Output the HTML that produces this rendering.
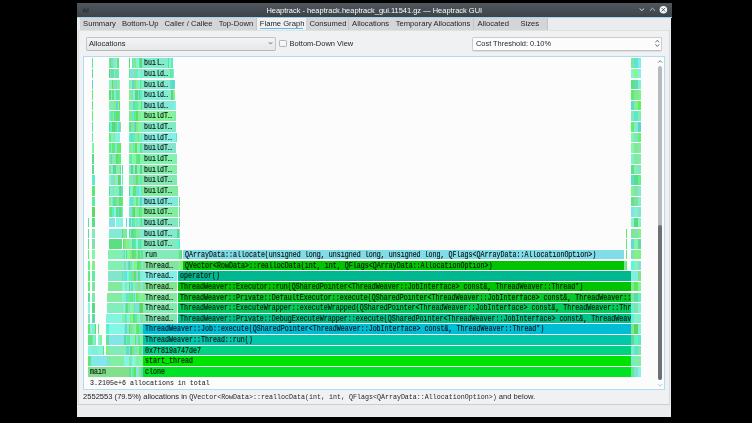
<!DOCTYPE html>
<html><head><meta charset="utf-8"><style>
html,body{margin:0;padding:0;background:#000;width:752px;height:423px;overflow:hidden;position:relative}
*{box-sizing:border-box}
.abs{position:absolute}
#win{position:absolute;left:77.2px;top:3px;width:594.3px;height:414.2px;background:#ebeced}
#title{position:absolute;left:77px;top:3px;width:594.5px;height:13.5px;background:linear-gradient(#4f575e,#3c4349);color:#fcfcfc;font:7.48px "Liberation Sans",sans-serif;text-align:center;line-height:15.3px}
#bl{position:absolute;left:77px;top:16.5px;width:594.5px;height:1.2px;background:#9fd5f0}
.tab{position:absolute;top:17.8px;height:11.8px;background:#d4d5d7;border-right:1px solid #c4c5c7;font:7.65px "Liberation Sans",sans-serif;color:#232629;line-height:11.8px;padding-left:3.5px;white-space:nowrap}
.tab.sel{background:#eff0f1;border-right:none}
.c{position:absolute;height:9.65px;font:8.7px "Liberation Mono",monospace;color:#0c0f10;line-height:9.65px;white-space:nowrap;overflow:hidden}
.c span{display:block;height:9.65px;position:relative;top:1px;overflow:hidden;transform:scaleX(0.766);transform-origin:0 0;margin-left:2.0px;-webkit-text-stroke:0.15px #0c0f10}
#root{position:absolute;left:0;top:0;width:752px;height:423px;will-change:transform}
</style></head><body><div id="root">
<div id="win"></div>
<div id="title">Heaptrack - heaptrack.heaptrack_gui.11541.gz — Heaptrack GUI</div>
<div id="bl"></div>
<svg class="abs" style="left:82px;top:6px" width="8" height="8" viewBox="0 0 8 8"><path d="M1.5,6.5 L1.5,3 M3,6.5 L3,2 M4.5,6.5 L4.5,4 M6,6.5 L6,1.5" stroke="#2a3035" stroke-width="1"/></svg>
<svg class="abs" style="left:630px;top:2px" width="42" height="16" viewBox="630 2 42 16">
<polyline points="639.6,8.5 641.85,10.6 644.1,8.5" fill="none" stroke="#eceff1" stroke-width="0.9"/>
<polyline points="649.9,10.7 652.45,8.2 655,10.7" fill="none" stroke="#c9cdd0" stroke-width="0.9"/>
<circle cx="663.4" cy="9.7" r="3.8" fill="#f4f5f6"/>
<path d="M661.6,7.9 L665.2,11.5 M665.2,7.9 L661.6,11.5" stroke="#4a5157" stroke-width="0.9"/>
</svg>
<div class="abs" style="left:78.2px;top:29.6px;width:591.6px;height:375px;border:1.2px solid #d9dadc;border-bottom-color:#cdcecf;border-top:0.6px solid #dfe0e1;background:#f0f1f2"></div>
<div class="tab" style="left:79.6px;width:39.3px">Summary</div>
<div class="tab" style="left:118.4px;width:43.2px">Bottom-Up</div>
<div class="tab" style="left:161.1px;width:54.7px">Caller / Callee</div>
<div class="tab" style="left:215.3px;width:42.2px">Top-Down</div>
<div class="tab sel" style="left:257px;width:49.0px;padding-left:2.8px">Flame Graph<div class="abs" style="left:2.8px;right:3.4px;top:10.1px;height:0.9px;background:#5fbbea"></div></div>
<div class="tab" style="left:306px;width:43.1px">Consumed</div>
<div class="tab" style="left:348.6px;width:44.1px">Allocations</div>
<div class="tab" style="left:392.2px;width:82.3px">Temporary Allocations</div>
<div class="tab" style="left:474px;width:38.8px">Allocated</div>
<div class="tab" style="left:512.3px;width:36.0px;text-align:center;padding-left:0">Sizes</div>
<!-- combo -->
<div class="abs" style="left:86.2px;top:37.1px;width:190px;height:13.6px;border:1px solid #c3c5c6;border-bottom-color:#b5b7b9;border-radius:2px;background:linear-gradient(#f3f4f4,#e6e7e8);font:7.6px 'Liberation Sans',sans-serif;color:#232629;line-height:11.6px;padding-left:1.7px">Allocations</div>
<div class="abs" style="left:279.3px;top:39.8px;width:7.6px;height:7px;border:1px solid #b3b5b7;border-radius:1.2px;background:linear-gradient(#fafafa,#f0f1f1)"></div>
<div class="abs" style="left:289.6px;top:37.2px;height:13.2px;font:7.5px 'Liberation Sans',sans-serif;color:#232629;line-height:13.2px;white-space:nowrap">Bottom-Down View</div>
<div class="abs" style="left:472.4px;top:37.2px;width:190px;height:13.6px;border:1px solid #cbcdce;border-bottom-color:#c0c2c4;border-radius:2px;background:#fcfcfc;box-shadow:0 0.6px 0.8px rgba(0,0,0,0.08);font:7.4px 'Liberation Sans',sans-serif;color:#232629;line-height:11.2px;padding-left:2.6px">Cost Threshold: 0.10%</div>
<svg class="abs" style="left:260px;top:30px" width="420" height="30" viewBox="260 30 420 30">
<polyline points="268.8,42.1 270.55,44.1 272.3,42.1" fill="none" stroke="#5d6166" stroke-width="0.8"/>
<polyline points="655.4,42.4 657.3,40.2 659.2,42.4" fill="none" stroke="#4d5257" stroke-width="0.8"/>
<polyline points="655.4,44.3 657.3,46.5 659.2,44.3" fill="none" stroke="#4d5257" stroke-width="0.8"/>
</svg>
<!-- frame -->
<div class="abs" style="left:83px;top:56px;width:582px;height:334px;border:1px solid #b2daf0;background:#fcfcfc"></div>
<!-- scrollbar -->
<svg class="abs" style="left:650px;top:55px" width="20" height="340" viewBox="650 55 20 340">
<polyline points="658.3,62.6 660.2,60.6 662.1,62.6" fill="none" stroke="#55595e" stroke-width="0.8"/>
<polyline points="658.3,384.2 660.2,386.2 662.1,384.2" fill="none" stroke="#b0b3b6" stroke-width="0.8"/>
</svg>
<div class="abs" style="left:658px;top:66px;width:4.2px;height:314px;border-radius:2.1px;background:#b8babc"></div>
<div class="abs" style="left:658px;top:225px;width:4.2px;height:155px;border-radius:2.1px;background:#6c7074"></div>
<div class="c" style="left:91.77px;top:57.60px;width:1.05px;height:10.2px;background:#5ce895"></div><div class="c" style="left:108.70px;top:57.60px;width:1.80px;height:10.2px;background:#82e19d"></div><div class="c" style="left:109.80px;top:57.60px;width:1.82px;height:10.2px;background:#5cdf9c"></div><div class="c" style="left:110.92px;top:57.60px;width:3.08px;height:10.2px;background:#82e297"></div><div class="c" style="left:113.30px;top:57.60px;width:2.53px;height:10.2px;background:#82e3e8"></div><div class="c" style="left:115.13px;top:57.60px;width:2.54px;height:10.2px;background:#82f5b6"></div><div class="c" style="left:117.14px;top:57.60px;width:1.98px;height:10.2px;background:#5ce582"></div><div class="c" style="left:129.08px;top:57.60px;width:0.75px;height:10.2px;background:#5cdc74"></div><div class="c" style="left:131.50px;top:57.60px;width:2.00px;height:10.2px;background:#5ce9bc"></div><div class="c" style="left:132.80px;top:57.60px;width:2.08px;height:10.2px;background:#82e4b6"></div><div class="c" style="left:134.18px;top:57.60px;width:2.64px;height:10.2px;background:#82e992"></div><div class="c" style="left:136.11px;top:57.60px;width:2.48px;height:10.2px;background:#82f2d4"></div><div class="c" style="left:137.89px;top:57.60px;width:1.69px;height:10.2px;background:#82f7d7"></div><div class="c" style="left:138.88px;top:57.60px;width:2.27px;height:10.2px;background:#5ce59c"></div><div class="c" style="left:140.45px;top:57.60px;width:2.45px;height:10.2px;background:#5cd77b"></div><div class="c" style="left:142.20px;top:57.60px;width:26.60px;height:10.2px;background:#82ebc7"><span style="width:30.03px;top:1px">buil…</span></div><div class="c" style="left:168.10px;top:57.60px;width:1.83px;height:10.2px;background:#5ce673"></div><div class="c" style="left:169.23px;top:57.60px;width:2.57px;height:10.2px;background:#82f0e8"></div><div class="c" style="left:171.27px;top:57.60px;width:1.25px;height:10.2px;background:#5cecc4"></div><div class="c" style="left:631.40px;top:57.60px;width:3.00px;height:10.2px;background:#82e699"></div><div class="c" style="left:633.70px;top:57.60px;width:4.40px;height:10.2px;background:#5ce3dc"></div><div class="c" style="left:637.57px;top:57.60px;width:3.15px;height:10.2px;background:#82ebe5"></div><div class="c" style="left:91.77px;top:68.85px;width:1.05px;height:9.55px;background:#5cdea3"></div><div class="c" style="left:108.70px;top:68.85px;width:2.18px;height:9.55px;background:#5cd76c"></div><div class="c" style="left:110.18px;top:68.85px;width:1.86px;height:9.55px;background:#82e2b0"></div><div class="c" style="left:111.34px;top:68.85px;width:1.72px;height:9.55px;background:#5cdec0"></div><div class="c" style="left:112.35px;top:68.85px;width:2.68px;height:9.55px;background:#5ce3be"></div><div class="c" style="left:114.33px;top:68.85px;width:1.81px;height:9.55px;background:#82eebc"></div><div class="c" style="left:115.44px;top:68.85px;width:2.13px;height:9.55px;background:#82e48f"></div><div class="c" style="left:117.05px;top:68.85px;width:2.08px;height:9.55px;background:#5ce9cd"></div><div class="c" style="left:128.90px;top:68.85px;width:1.64px;height:9.55px;background:#5ceb97"></div><div class="c" style="left:129.84px;top:68.85px;width:2.52px;height:9.55px;background:#82e0e1"></div><div class="c" style="left:131.66px;top:68.85px;width:3.26px;height:9.55px;background:#82e2d9"></div><div class="c" style="left:134.23px;top:68.85px;width:2.48px;height:9.55px;background:#82e4af"></div><div class="c" style="left:136.01px;top:68.85px;width:2.51px;height:9.55px;background:#5cf5ae"></div><div class="c" style="left:137.81px;top:68.85px;width:1.98px;height:9.55px;background:#82f8e1"></div><div class="c" style="left:139.09px;top:68.85px;width:2.97px;height:9.55px;background:#82ebdf"></div><div class="c" style="left:141.36px;top:68.85px;width:1.54px;height:9.55px;background:#82eeaf"></div><div class="c" style="left:142.20px;top:68.85px;width:28.10px;height:9.55px;background:#82eecc"><span style="width:31.98px;top:1px">build…</span></div><div class="c" style="left:169.60px;top:68.85px;width:1.77px;height:9.55px;background:#5cf266"></div><div class="c" style="left:170.67px;top:68.85px;width:2.65px;height:9.55px;background:#5ce9cb"></div><div class="c" style="left:172.79px;top:68.85px;width:0.83px;height:9.55px;background:#82edcb"></div><div class="c" style="left:631.40px;top:68.85px;width:3.00px;height:9.55px;background:#82f2d8"></div><div class="c" style="left:633.70px;top:68.85px;width:4.40px;height:9.55px;background:#82f88d"></div><div class="c" style="left:637.57px;top:68.85px;width:3.15px;height:9.55px;background:#82f0e5"></div><div class="c" style="left:91.77px;top:79.50px;width:1.05px;height:9.55px;background:#5cd6dd"></div><div class="c" style="left:108.70px;top:79.50px;width:2.04px;height:9.55px;background:#82f5cd"></div><div class="c" style="left:110.04px;top:79.50px;width:2.36px;height:9.55px;background:#82f6ae"></div><div class="c" style="left:111.70px;top:79.50px;width:2.22px;height:9.55px;background:#5cde6c"></div><div class="c" style="left:113.22px;top:79.50px;width:1.93px;height:9.55px;background:#82e6be"></div><div class="c" style="left:114.46px;top:79.50px;width:3.13px;height:9.55px;background:#82dfbe"></div><div class="c" style="left:116.89px;top:79.50px;width:2.18px;height:9.55px;background:#82f38c"></div><div class="c" style="left:118.55px;top:79.50px;width:0.58px;height:9.55px;background:#82ebe4"></div><div class="c" style="left:128.90px;top:79.50px;width:1.94px;height:9.55px;background:#82e5b8"></div><div class="c" style="left:130.14px;top:79.50px;width:2.17px;height:9.55px;background:#82f6b4"></div><div class="c" style="left:131.60px;top:79.50px;width:2.86px;height:9.55px;background:#5cd9d2"></div><div class="c" style="left:133.77px;top:79.50px;width:3.29px;height:9.55px;background:#82e095"></div><div class="c" style="left:136.36px;top:79.50px;width:2.39px;height:9.55px;background:#82f394"></div><div class="c" style="left:138.05px;top:79.50px;width:2.61px;height:9.55px;background:#82eed4"></div><div class="c" style="left:139.96px;top:79.50px;width:1.87px;height:9.55px;background:#5cec71"></div><div class="c" style="left:141.13px;top:79.50px;width:1.77px;height:9.55px;background:#5cf3c6"></div><div class="c" style="left:142.20px;top:79.50px;width:28.60px;height:9.55px;background:#82ebcc"><span style="width:32.64px;top:1px">build…</span></div><div class="c" style="left:170.10px;top:79.50px;width:2.21px;height:9.55px;background:#5cdfde"></div><div class="c" style="left:171.61px;top:79.50px;width:2.93px;height:9.55px;background:#5cd9ba"></div><div class="c" style="left:174.02px;top:79.50px;width:0.61px;height:9.55px;background:#5ce3d3"></div><div class="c" style="left:631.40px;top:79.50px;width:3.00px;height:9.55px;background:#5ce27c"></div><div class="c" style="left:633.70px;top:79.50px;width:4.40px;height:9.55px;background:#5cdeb2"></div><div class="c" style="left:637.57px;top:79.50px;width:3.15px;height:9.55px;background:#82edd6"></div><div class="c" style="left:91.77px;top:90.15px;width:1.05px;height:9.55px;background:#5cf372"></div><div class="c" style="left:108.70px;top:90.15px;width:3.08px;height:9.55px;background:#5cde60"></div><div class="c" style="left:111.08px;top:90.15px;width:2.10px;height:9.55px;background:#82e6e2"></div><div class="c" style="left:112.48px;top:90.15px;width:2.04px;height:9.55px;background:#5ce671"></div><div class="c" style="left:113.82px;top:90.15px;width:2.86px;height:9.55px;background:#82edd5"></div><div class="c" style="left:115.98px;top:90.15px;width:3.14px;height:9.55px;background:#5ce6ae"></div><div class="c" style="left:118.59px;top:90.15px;width:0.53px;height:9.55px;background:#82ef84"></div><div class="c" style="left:128.90px;top:90.15px;width:2.92px;height:9.55px;background:#82f282"></div><div class="c" style="left:131.12px;top:90.15px;width:1.85px;height:9.55px;background:#82e4bd"></div><div class="c" style="left:132.27px;top:90.15px;width:1.80px;height:9.55px;background:#82e1ab"></div><div class="c" style="left:133.38px;top:90.15px;width:2.50px;height:9.55px;background:#82eee4"></div><div class="c" style="left:135.18px;top:90.15px;width:3.10px;height:9.55px;background:#5cd784"></div><div class="c" style="left:137.58px;top:90.15px;width:1.67px;height:9.55px;background:#82e2c1"></div><div class="c" style="left:138.55px;top:90.15px;width:1.65px;height:9.55px;background:#5cd8a4"></div><div class="c" style="left:139.50px;top:90.15px;width:3.40px;height:9.55px;background:#5ceeb0"></div><div class="c" style="left:142.20px;top:90.15px;width:29.70px;height:9.55px;background:#82eed5"><span style="width:34.07px;top:1px">build…</span></div><div class="c" style="left:171.20px;top:90.15px;width:2.64px;height:9.55px;background:#5cd86f"></div><div class="c" style="left:173.14px;top:90.15px;width:1.88px;height:9.55px;background:#82e995"></div><div class="c" style="left:174.49px;top:90.15px;width:0.63px;height:9.55px;background:#82f48b"></div><div class="c" style="left:631.40px;top:90.15px;width:3.00px;height:9.55px;background:#5cec6f"></div><div class="c" style="left:633.70px;top:90.15px;width:4.40px;height:9.55px;background:#82e693"></div><div class="c" style="left:637.57px;top:90.15px;width:3.15px;height:9.55px;background:#82f089"></div><div class="c" style="left:91.97px;top:100.80px;width:0.85px;height:9.55px;background:#5ce0a5"></div><div class="c" style="left:108.70px;top:100.80px;width:2.97px;height:9.55px;background:#82efa1"></div><div class="c" style="left:110.97px;top:100.80px;width:3.09px;height:9.55px;background:#82e7c8"></div><div class="c" style="left:113.36px;top:100.80px;width:1.94px;height:9.55px;background:#82ed93"></div><div class="c" style="left:114.61px;top:100.80px;width:2.27px;height:9.55px;background:#82e98b"></div><div class="c" style="left:116.17px;top:100.80px;width:2.33px;height:9.55px;background:#5cdec9"></div><div class="c" style="left:117.80px;top:100.80px;width:1.81px;height:9.55px;background:#82f795"></div><div class="c" style="left:119.09px;top:100.80px;width:0.94px;height:9.55px;background:#5ce473"></div><div class="c" style="left:128.90px;top:100.80px;width:1.83px;height:9.55px;background:#82ed9d"></div><div class="c" style="left:130.03px;top:100.80px;width:1.76px;height:9.55px;background:#82ee96"></div><div class="c" style="left:131.09px;top:100.80px;width:3.02px;height:9.55px;background:#82e4da"></div><div class="c" style="left:133.41px;top:100.80px;width:2.48px;height:9.55px;background:#5ce3a0"></div><div class="c" style="left:135.19px;top:100.80px;width:2.14px;height:9.55px;background:#5cf397"></div><div class="c" style="left:136.63px;top:100.80px;width:2.54px;height:9.55px;background:#5ce7cf"></div><div class="c" style="left:138.47px;top:100.80px;width:2.16px;height:9.55px;background:#82f2a7"></div><div class="c" style="left:139.93px;top:100.80px;width:1.71px;height:9.55px;background:#82f89e"></div><div class="c" style="left:140.94px;top:100.80px;width:1.96px;height:9.55px;background:#5ce088"></div><div class="c" style="left:142.20px;top:100.80px;width:32.30px;height:9.55px;background:#82ebd5"><span style="width:37.47px;top:1px">build…</span></div><div class="c" style="left:173.98px;top:100.80px;width:2.25px;height:9.55px;background:#82f1e5"></div><div class="c" style="left:631.40px;top:100.80px;width:3.00px;height:9.55px;background:#5cdbce"></div><div class="c" style="left:633.70px;top:100.80px;width:4.40px;height:9.55px;background:#82ee97"></div><div class="c" style="left:637.57px;top:100.80px;width:3.15px;height:9.55px;background:#5cf35c"></div><div class="c" style="left:91.97px;top:111.45px;width:0.85px;height:9.55px;background:#5cf579"></div><div class="c" style="left:108.70px;top:111.45px;width:1.82px;height:9.55px;background:#82ecd7"></div><div class="c" style="left:109.82px;top:111.45px;width:2.04px;height:9.55px;background:#82e4c5"></div><div class="c" style="left:111.16px;top:111.45px;width:2.57px;height:9.55px;background:#5cf291"></div><div class="c" style="left:113.03px;top:111.45px;width:1.70px;height:9.55px;background:#82f599"></div><div class="c" style="left:114.03px;top:111.45px;width:1.72px;height:9.55px;background:#5cd6c3"></div><div class="c" style="left:115.05px;top:111.45px;width:2.04px;height:9.55px;background:#5cee80"></div><div class="c" style="left:116.39px;top:111.45px;width:3.07px;height:9.55px;background:#5ce85d"></div><div class="c" style="left:118.94px;top:111.45px;width:1.09px;height:9.55px;background:#5ce0c2"></div><div class="c" style="left:128.90px;top:111.45px;width:2.50px;height:9.55px;background:#82e690"></div><div class="c" style="left:130.70px;top:111.45px;width:2.05px;height:9.55px;background:#82e59b"></div><div class="c" style="left:132.04px;top:111.45px;width:2.67px;height:9.55px;background:#5cebd8"></div><div class="c" style="left:134.01px;top:111.45px;width:2.36px;height:9.55px;background:#5cf179"></div><div class="c" style="left:135.67px;top:111.45px;width:2.97px;height:9.55px;background:#5ce062"></div><div class="c" style="left:137.93px;top:111.45px;width:2.85px;height:9.55px;background:#82f09a"></div><div class="c" style="left:140.08px;top:111.45px;width:2.02px;height:9.55px;background:#82ed8f"></div><div class="c" style="left:141.40px;top:111.45px;width:1.50px;height:9.55px;background:#82f4c0"></div><div class="c" style="left:142.20px;top:111.45px;width:32.80px;height:9.55px;background:#82f596"><span style="width:38.12px;top:1px">buildT…</span></div><div class="c" style="left:174.48px;top:111.45px;width:1.75px;height:9.55px;background:#82e9ad"></div><div class="c" style="left:631.40px;top:111.45px;width:3.00px;height:9.55px;background:#82e9bc"></div><div class="c" style="left:633.70px;top:111.45px;width:4.40px;height:9.55px;background:#5ce9c9"></div><div class="c" style="left:637.57px;top:111.45px;width:3.15px;height:9.55px;background:#82edb1"></div><div class="c" style="left:91.97px;top:122.10px;width:0.85px;height:9.55px;background:#5ce5ae"></div><div class="c" style="left:108.70px;top:122.10px;width:1.97px;height:9.55px;background:#5cde93"></div><div class="c" style="left:109.97px;top:122.10px;width:3.10px;height:9.55px;background:#5cf3c3"></div><div class="c" style="left:112.37px;top:122.10px;width:3.28px;height:9.55px;background:#5cd771"></div><div class="c" style="left:114.95px;top:122.10px;width:2.66px;height:9.55px;background:#5ce0a2"></div><div class="c" style="left:116.91px;top:122.10px;width:1.74px;height:9.55px;background:#82ebc1"></div><div class="c" style="left:117.95px;top:122.10px;width:2.08px;height:9.55px;background:#5cdfcd"></div><div class="c" style="left:119.51px;top:122.10px;width:0.52px;height:9.55px;background:#82e4a3"></div><div class="c" style="left:128.90px;top:122.10px;width:2.05px;height:9.55px;background:#5ce3b5"></div><div class="c" style="left:130.25px;top:122.10px;width:1.66px;height:9.55px;background:#5ce27f"></div><div class="c" style="left:131.21px;top:122.10px;width:1.60px;height:9.55px;background:#82eb8c"></div><div class="c" style="left:132.11px;top:122.10px;width:2.45px;height:9.55px;background:#82e5a1"></div><div class="c" style="left:133.86px;top:122.10px;width:1.61px;height:9.55px;background:#5ce0e2"></div><div class="c" style="left:134.77px;top:122.10px;width:2.28px;height:9.55px;background:#5cd79c"></div><div class="c" style="left:136.35px;top:122.10px;width:2.12px;height:9.55px;background:#82e68c"></div><div class="c" style="left:137.77px;top:122.10px;width:2.50px;height:9.55px;background:#82f795"></div><div class="c" style="left:139.57px;top:122.10px;width:3.33px;height:9.55px;background:#82f2b3"></div><div class="c" style="left:142.38px;top:122.10px;width:33.95px;height:9.55px;background:#82e9c7"><span style="width:39.62px;top:1px">buildT…</span></div><div class="c" style="left:631.40px;top:122.10px;width:3.00px;height:9.55px;background:#5cf168"></div><div class="c" style="left:633.70px;top:122.10px;width:4.40px;height:9.55px;background:#82ead1"></div><div class="c" style="left:637.57px;top:122.10px;width:3.15px;height:9.55px;background:#5cd6c0"></div><div class="c" style="left:91.97px;top:132.75px;width:0.85px;height:9.55px;background:#5cf3ac"></div><div class="c" style="left:108.70px;top:132.75px;width:2.83px;height:9.55px;background:#5cf073"></div><div class="c" style="left:110.83px;top:132.75px;width:3.02px;height:9.55px;background:#82efd0"></div><div class="c" style="left:113.15px;top:132.75px;width:2.79px;height:9.55px;background:#82ef93"></div><div class="c" style="left:115.24px;top:132.75px;width:2.88px;height:9.55px;background:#82f1e8"></div><div class="c" style="left:117.60px;top:132.75px;width:2.43px;height:9.55px;background:#82f1e6"></div><div class="c" style="left:128.90px;top:132.75px;width:2.76px;height:9.55px;background:#5cf2c5"></div><div class="c" style="left:130.96px;top:132.75px;width:1.65px;height:9.55px;background:#5cdbc4"></div><div class="c" style="left:131.91px;top:132.75px;width:1.78px;height:9.55px;background:#5ce7b7"></div><div class="c" style="left:132.99px;top:132.75px;width:1.63px;height:9.55px;background:#5cebcb"></div><div class="c" style="left:133.92px;top:132.75px;width:2.05px;height:9.55px;background:#5ce8de"></div><div class="c" style="left:135.27px;top:132.75px;width:3.19px;height:9.55px;background:#82f08d"></div><div class="c" style="left:137.76px;top:132.75px;width:1.71px;height:9.55px;background:#5cf3a9"></div><div class="c" style="left:138.77px;top:132.75px;width:1.73px;height:9.55px;background:#82e79f"></div><div class="c" style="left:139.80px;top:132.75px;width:1.95px;height:9.55px;background:#82f6d3"></div><div class="c" style="left:141.05px;top:132.75px;width:1.85px;height:9.55px;background:#82eb8b"></div><div class="c" style="left:142.20px;top:132.75px;width:34.00px;height:9.55px;background:#82f0e4"><span style="width:39.69px;top:1px">buildT…</span></div><div class="c" style="left:175.68px;top:132.75px;width:1.15px;height:9.55px;background:#5ceead"></div><div class="c" style="left:631.40px;top:132.75px;width:3.00px;height:9.55px;background:#82f6ab"></div><div class="c" style="left:633.70px;top:132.75px;width:4.40px;height:9.55px;background:#82e2c2"></div><div class="c" style="left:637.57px;top:132.75px;width:3.15px;height:9.55px;background:#5cf473"></div><div class="c" style="left:91.97px;top:143.40px;width:2.05px;height:9.55px;background:#82f4a6"></div><div class="c" style="left:109.00px;top:143.40px;width:2.65px;height:9.55px;background:#5cf07c"></div><div class="c" style="left:110.95px;top:143.40px;width:1.85px;height:9.55px;background:#82e7d3"></div><div class="c" style="left:112.10px;top:143.40px;width:2.12px;height:9.55px;background:#5cec72"></div><div class="c" style="left:113.52px;top:143.40px;width:1.70px;height:9.55px;background:#5ce0ca"></div><div class="c" style="left:114.52px;top:143.40px;width:1.97px;height:9.55px;background:#82eea6"></div><div class="c" style="left:115.79px;top:143.40px;width:2.09px;height:9.55px;background:#82edbc"></div><div class="c" style="left:117.18px;top:143.40px;width:3.29px;height:9.55px;background:#5cec7c"></div><div class="c" style="left:119.94px;top:143.40px;width:0.89px;height:9.55px;background:#5ce95e"></div><div class="c" style="left:128.90px;top:143.40px;width:1.73px;height:9.55px;background:#82efba"></div><div class="c" style="left:129.93px;top:143.40px;width:2.26px;height:9.55px;background:#82e68b"></div><div class="c" style="left:131.49px;top:143.40px;width:1.84px;height:9.55px;background:#82efa3"></div><div class="c" style="left:132.63px;top:143.40px;width:1.83px;height:9.55px;background:#5cefaf"></div><div class="c" style="left:133.75px;top:143.40px;width:1.79px;height:9.55px;background:#82ea9f"></div><div class="c" style="left:134.85px;top:143.40px;width:3.09px;height:9.55px;background:#5ce560"></div><div class="c" style="left:137.24px;top:143.40px;width:3.21px;height:9.55px;background:#82f4ba"></div><div class="c" style="left:139.75px;top:143.40px;width:3.15px;height:9.55px;background:#5ce694"></div><div class="c" style="left:142.38px;top:143.40px;width:33.95px;height:9.55px;background:#82e6cc"><span style="width:39.62px;top:1px">buildT…</span></div><div class="c" style="left:631.40px;top:143.40px;width:3.00px;height:9.55px;background:#82f5b6"></div><div class="c" style="left:633.70px;top:143.40px;width:4.40px;height:9.55px;background:#82e98e"></div><div class="c" style="left:637.57px;top:143.40px;width:3.15px;height:9.55px;background:#82eaad"></div><div class="c" style="left:91.97px;top:154.05px;width:2.15px;height:9.55px;background:#5cda92"></div><div class="c" style="left:109.00px;top:154.05px;width:2.88px;height:9.55px;background:#82eb91"></div><div class="c" style="left:111.18px;top:154.05px;width:1.93px;height:9.55px;background:#5cd5d5"></div><div class="c" style="left:112.41px;top:154.05px;width:2.23px;height:9.55px;background:#82ebb3"></div><div class="c" style="left:113.94px;top:154.05px;width:2.60px;height:9.55px;background:#82eab7"></div><div class="c" style="left:115.84px;top:154.05px;width:3.05px;height:9.55px;background:#5ce06c"></div><div class="c" style="left:118.20px;top:154.05px;width:2.73px;height:9.55px;background:#5cef74"></div><div class="c" style="left:120.40px;top:154.05px;width:0.50px;height:9.55px;background:#5cea8f"></div><div class="c" style="left:128.90px;top:154.05px;width:2.23px;height:9.55px;background:#82ec85"></div><div class="c" style="left:130.43px;top:154.05px;width:2.67px;height:9.55px;background:#5cecb5"></div><div class="c" style="left:132.41px;top:154.05px;width:1.74px;height:9.55px;background:#82f6b5"></div><div class="c" style="left:133.44px;top:154.05px;width:2.88px;height:9.55px;background:#82f3a6"></div><div class="c" style="left:135.62px;top:154.05px;width:3.15px;height:9.55px;background:#5cec70"></div><div class="c" style="left:138.07px;top:154.05px;width:2.31px;height:9.55px;background:#5ce18c"></div><div class="c" style="left:139.68px;top:154.05px;width:3.22px;height:9.55px;background:#82f3a2"></div><div class="c" style="left:142.38px;top:154.05px;width:34.95px;height:9.55px;background:#82f3ae"><span style="width:40.93px;top:1px">buildT…</span></div><div class="c" style="left:631.40px;top:154.05px;width:3.00px;height:9.55px;background:#82efc7"></div><div class="c" style="left:633.70px;top:154.05px;width:4.40px;height:9.55px;background:#82e6a5"></div><div class="c" style="left:637.57px;top:154.05px;width:3.15px;height:9.55px;background:#82eca1"></div><div class="c" style="left:91.97px;top:164.70px;width:2.35px;height:9.55px;background:#5cdf8d"></div><div class="c" style="left:109.00px;top:164.70px;width:2.74px;height:9.55px;background:#82e397"></div><div class="c" style="left:111.04px;top:164.70px;width:1.73px;height:9.55px;background:#82efe7"></div><div class="c" style="left:112.06px;top:164.70px;width:1.97px;height:9.55px;background:#82e9e1"></div><div class="c" style="left:113.34px;top:164.70px;width:1.84px;height:9.55px;background:#5cdd83"></div><div class="c" style="left:114.48px;top:164.70px;width:2.18px;height:9.55px;background:#5cd990"></div><div class="c" style="left:115.96px;top:164.70px;width:2.04px;height:9.55px;background:#82f19b"></div><div class="c" style="left:117.30px;top:164.70px;width:2.87px;height:9.55px;background:#82ecb2"></div><div class="c" style="left:119.65px;top:164.70px;width:1.18px;height:9.55px;background:#5ce588"></div><div class="c" style="left:121.97px;top:164.70px;width:1.15px;height:9.55px;background:#5cd7ad"></div><div class="c" style="left:128.90px;top:164.70px;width:3.25px;height:9.55px;background:#82e3d8"></div><div class="c" style="left:131.45px;top:164.70px;width:2.67px;height:9.55px;background:#5cde6b"></div><div class="c" style="left:133.42px;top:164.70px;width:2.02px;height:9.55px;background:#82ebd3"></div><div class="c" style="left:134.74px;top:164.70px;width:3.22px;height:9.55px;background:#5cd670"></div><div class="c" style="left:137.26px;top:164.70px;width:2.81px;height:9.55px;background:#82eecc"></div><div class="c" style="left:139.37px;top:164.70px;width:1.72px;height:9.55px;background:#82efbc"></div><div class="c" style="left:140.39px;top:164.70px;width:2.51px;height:9.55px;background:#5cd980"></div><div class="c" style="left:142.38px;top:164.70px;width:34.95px;height:9.55px;background:#82eea9"><span style="width:40.93px;top:1px">buildT…</span></div><div class="c" style="left:631.40px;top:164.70px;width:3.00px;height:9.55px;background:#5ce18b"></div><div class="c" style="left:633.70px;top:164.70px;width:4.40px;height:9.55px;background:#82eeb4"></div><div class="c" style="left:637.57px;top:164.70px;width:3.15px;height:9.55px;background:#82e7c1"></div><div class="c" style="left:91.97px;top:175.35px;width:2.95px;height:9.55px;background:#5cebcb"></div><div class="c" style="left:109.00px;top:175.35px;width:3.00px;height:9.55px;background:#82f5d3"></div><div class="c" style="left:111.30px;top:175.35px;width:3.12px;height:9.55px;background:#82e2c7"></div><div class="c" style="left:113.72px;top:175.35px;width:1.60px;height:9.55px;background:#82e39f"></div><div class="c" style="left:114.63px;top:175.35px;width:1.66px;height:9.55px;background:#82f5a8"></div><div class="c" style="left:115.59px;top:175.35px;width:2.67px;height:9.55px;background:#82efd1"></div><div class="c" style="left:117.56px;top:175.35px;width:2.90px;height:9.55px;background:#5cd967"></div><div class="c" style="left:119.93px;top:175.35px;width:0.90px;height:9.55px;background:#5cdd9b"></div><div class="c" style="left:122.17px;top:175.35px;width:1.15px;height:9.55px;background:#5cf5be"></div><div class="c" style="left:128.90px;top:175.35px;width:2.51px;height:9.55px;background:#82eda5"></div><div class="c" style="left:130.71px;top:175.35px;width:2.70px;height:9.55px;background:#82e6bd"></div><div class="c" style="left:132.71px;top:175.35px;width:2.53px;height:9.55px;background:#82e0b5"></div><div class="c" style="left:134.54px;top:175.35px;width:2.12px;height:9.55px;background:#82e09a"></div><div class="c" style="left:135.96px;top:175.35px;width:2.75px;height:9.55px;background:#5ce669"></div><div class="c" style="left:138.01px;top:175.35px;width:2.73px;height:9.55px;background:#82ea9e"></div><div class="c" style="left:140.04px;top:175.35px;width:2.86px;height:9.55px;background:#5cf2a0"></div><div class="c" style="left:142.38px;top:175.35px;width:34.95px;height:9.55px;background:#82e9b3"><span style="width:40.93px;top:1px">buildT…</span></div><div class="c" style="left:631.40px;top:175.35px;width:3.00px;height:9.55px;background:#5cdec7"></div><div class="c" style="left:633.70px;top:175.35px;width:4.40px;height:9.55px;background:#5cda92"></div><div class="c" style="left:637.57px;top:175.35px;width:3.15px;height:9.55px;background:#5cf28c"></div><div class="c" style="left:91.97px;top:186.00px;width:2.95px;height:9.55px;background:#5ce57c"></div><div class="c" style="left:109.00px;top:186.00px;width:2.10px;height:9.55px;background:#5cea67"></div><div class="c" style="left:110.40px;top:186.00px;width:3.25px;height:9.55px;background:#82e8e2"></div><div class="c" style="left:112.95px;top:186.00px;width:1.99px;height:9.55px;background:#82e6a3"></div><div class="c" style="left:114.24px;top:186.00px;width:2.10px;height:9.55px;background:#82f2c0"></div><div class="c" style="left:115.64px;top:186.00px;width:3.12px;height:9.55px;background:#82eeb6"></div><div class="c" style="left:118.06px;top:186.00px;width:1.70px;height:9.55px;background:#82f294"></div><div class="c" style="left:119.06px;top:186.00px;width:1.69px;height:9.55px;background:#5cd6bd"></div><div class="c" style="left:120.05px;top:186.00px;width:1.69px;height:9.55px;background:#5cd77a"></div><div class="c" style="left:121.21px;top:186.00px;width:2.11px;height:9.55px;background:#5ce2d3"></div><div class="c" style="left:128.90px;top:186.00px;width:1.73px;height:9.55px;background:#5cdc92"></div><div class="c" style="left:129.93px;top:186.00px;width:2.71px;height:9.55px;background:#82efe0"></div><div class="c" style="left:131.94px;top:186.00px;width:2.13px;height:9.55px;background:#82f6b1"></div><div class="c" style="left:133.37px;top:186.00px;width:3.27px;height:9.55px;background:#5ce777"></div><div class="c" style="left:135.95px;top:186.00px;width:1.73px;height:9.55px;background:#82e2ae"></div><div class="c" style="left:136.98px;top:186.00px;width:3.10px;height:9.55px;background:#5cecd8"></div><div class="c" style="left:139.39px;top:186.00px;width:2.21px;height:9.55px;background:#82e8e9"></div><div class="c" style="left:140.89px;top:186.00px;width:2.01px;height:9.55px;background:#5cf2a9"></div><div class="c" style="left:142.38px;top:186.00px;width:35.25px;height:9.55px;background:#82eb9f"><span style="width:41.32px;top:1px">buildT…</span></div><div class="c" style="left:631.40px;top:186.00px;width:3.00px;height:9.55px;background:#82f38d"></div><div class="c" style="left:633.70px;top:186.00px;width:4.40px;height:9.55px;background:#82e0b4"></div><div class="c" style="left:637.57px;top:186.00px;width:3.15px;height:9.55px;background:#82ebc6"></div><div class="c" style="left:91.97px;top:196.65px;width:2.95px;height:9.55px;background:#5ceba5"></div><div class="c" style="left:109.00px;top:196.65px;width:2.22px;height:9.55px;background:#82ee85"></div><div class="c" style="left:110.52px;top:196.65px;width:2.02px;height:9.55px;background:#82f3e2"></div><div class="c" style="left:111.84px;top:196.65px;width:2.24px;height:9.55px;background:#82ed8a"></div><div class="c" style="left:113.38px;top:196.65px;width:1.71px;height:9.55px;background:#5cddd6"></div><div class="c" style="left:114.38px;top:196.65px;width:2.63px;height:9.55px;background:#5ce488"></div><div class="c" style="left:116.31px;top:196.65px;width:3.22px;height:9.55px;background:#82e0a3"></div><div class="c" style="left:118.84px;top:196.65px;width:2.77px;height:9.55px;background:#5ce08c"></div><div class="c" style="left:121.08px;top:196.65px;width:2.24px;height:9.55px;background:#5cef66"></div><div class="c" style="left:128.90px;top:196.65px;width:2.00px;height:9.55px;background:#82eedc"></div><div class="c" style="left:130.20px;top:196.65px;width:3.22px;height:9.55px;background:#5ce5dd"></div><div class="c" style="left:132.72px;top:196.65px;width:2.33px;height:9.55px;background:#82ee92"></div><div class="c" style="left:134.35px;top:196.65px;width:1.91px;height:9.55px;background:#82f6a8"></div><div class="c" style="left:135.56px;top:196.65px;width:2.91px;height:9.55px;background:#5cee82"></div><div class="c" style="left:137.77px;top:196.65px;width:2.14px;height:9.55px;background:#82eae4"></div><div class="c" style="left:139.22px;top:196.65px;width:1.73px;height:9.55px;background:#82e5b3"></div><div class="c" style="left:140.25px;top:196.65px;width:2.02px;height:9.55px;background:#5cd8c6"></div><div class="c" style="left:141.57px;top:196.65px;width:1.33px;height:9.55px;background:#82e996"></div><div class="c" style="left:142.38px;top:196.65px;width:35.25px;height:9.55px;background:#82e9df"><span style="width:41.32px;top:1px">buildT…</span></div><div class="c" style="left:178.98px;top:196.65px;width:1.15px;height:9.55px;background:#5ce969"></div><div class="c" style="left:631.40px;top:196.65px;width:3.00px;height:9.55px;background:#5ce58c"></div><div class="c" style="left:633.70px;top:196.65px;width:4.40px;height:9.55px;background:#82e09a"></div><div class="c" style="left:637.57px;top:196.65px;width:3.15px;height:9.55px;background:#82eece"></div><div class="c" style="left:91.97px;top:207.30px;width:2.95px;height:9.55px;background:#5cd967"></div><div class="c" style="left:109.00px;top:207.30px;width:1.74px;height:9.55px;background:#82e2b6"></div><div class="c" style="left:110.04px;top:207.30px;width:2.81px;height:9.55px;background:#5ce778"></div><div class="c" style="left:112.15px;top:207.30px;width:2.31px;height:9.55px;background:#5ceeca"></div><div class="c" style="left:113.76px;top:207.30px;width:2.52px;height:9.55px;background:#82f7d5"></div><div class="c" style="left:115.57px;top:207.30px;width:2.93px;height:9.55px;background:#5ce18c"></div><div class="c" style="left:117.80px;top:207.30px;width:2.06px;height:9.55px;background:#5ce0d4"></div><div class="c" style="left:119.15px;top:207.30px;width:2.35px;height:9.55px;background:#5cdc83"></div><div class="c" style="left:120.80px;top:207.30px;width:2.08px;height:9.55px;background:#5ced7b"></div><div class="c" style="left:122.35px;top:207.30px;width:0.97px;height:9.55px;background:#82e6c1"></div><div class="c" style="left:128.90px;top:207.30px;width:2.70px;height:9.55px;background:#82e2d4"></div><div class="c" style="left:130.90px;top:207.30px;width:1.66px;height:9.55px;background:#82dfbd"></div><div class="c" style="left:131.87px;top:207.30px;width:1.99px;height:9.55px;background:#5ce799"></div><div class="c" style="left:133.16px;top:207.30px;width:2.10px;height:9.55px;background:#5cda63"></div><div class="c" style="left:134.56px;top:207.30px;width:3.25px;height:9.55px;background:#82f19a"></div><div class="c" style="left:137.11px;top:207.30px;width:2.23px;height:9.55px;background:#82e5ba"></div><div class="c" style="left:138.65px;top:207.30px;width:2.92px;height:9.55px;background:#5cf05c"></div><div class="c" style="left:140.86px;top:207.30px;width:2.04px;height:9.55px;background:#5cee95"></div><div class="c" style="left:142.38px;top:207.30px;width:35.25px;height:9.55px;background:#82ee9f"><span style="width:41.32px;top:1px">buildT…</span></div><div class="c" style="left:178.98px;top:207.30px;width:1.15px;height:9.55px;background:#5ce995"></div><div class="c" style="left:631.40px;top:207.30px;width:3.00px;height:9.55px;background:#82e1e5"></div><div class="c" style="left:633.70px;top:207.30px;width:4.40px;height:9.55px;background:#82f0ce"></div><div class="c" style="left:637.57px;top:207.30px;width:3.15px;height:9.55px;background:#82e4d0"></div><div class="c" style="left:88.38px;top:217.95px;width:0.50px;height:9.55px;background:#5ce493"></div><div class="c" style="left:91.97px;top:217.95px;width:2.95px;height:9.55px;background:#5cde85"></div><div class="c" style="left:109.17px;top:217.95px;width:6.15px;height:9.55px;background:#82e4e4"></div><div class="c" style="left:115.50px;top:217.95px;width:7.20px;height:9.55px;background:#82f5e4"></div><div class="c" style="left:122.17px;top:217.95px;width:1.15px;height:9.55px;background:#82f6d3"></div><div class="c" style="left:126.38px;top:217.95px;width:0.50px;height:9.55px;background:#5cd5e2"></div><div class="c" style="left:128.90px;top:217.95px;width:2.75px;height:9.55px;background:#5cdcc1"></div><div class="c" style="left:130.95px;top:217.95px;width:1.95px;height:9.55px;background:#82f8c0"></div><div class="c" style="left:132.20px;top:217.95px;width:1.71px;height:9.55px;background:#5cd9de"></div><div class="c" style="left:133.21px;top:217.95px;width:2.54px;height:9.55px;background:#5cefb3"></div><div class="c" style="left:135.04px;top:217.95px;width:1.88px;height:9.55px;background:#82f5a4"></div><div class="c" style="left:136.22px;top:217.95px;width:2.08px;height:9.55px;background:#82e8b6"></div><div class="c" style="left:137.60px;top:217.95px;width:2.13px;height:9.55px;background:#82f1af"></div><div class="c" style="left:139.03px;top:217.95px;width:1.63px;height:9.55px;background:#5cf5df"></div><div class="c" style="left:139.96px;top:217.95px;width:1.94px;height:9.55px;background:#5cf39e"></div><div class="c" style="left:141.20px;top:217.95px;width:1.70px;height:9.55px;background:#5cdca1"></div><div class="c" style="left:142.38px;top:217.95px;width:35.25px;height:9.55px;background:#82e6c2"><span style="width:41.32px;top:1px">buildT…</span></div><div class="c" style="left:178.98px;top:217.95px;width:1.15px;height:9.55px;background:#5ce995"></div><div class="c" style="left:631.40px;top:217.95px;width:3.00px;height:9.55px;background:#82f5cd"></div><div class="c" style="left:633.70px;top:217.95px;width:4.40px;height:9.55px;background:#5cd97e"></div><div class="c" style="left:637.57px;top:217.95px;width:3.15px;height:9.55px;background:#82f3bb"></div><div class="c" style="left:88.38px;top:228.60px;width:0.50px;height:9.55px;background:#5cd99e"></div><div class="c" style="left:91.97px;top:228.60px;width:2.95px;height:9.55px;background:#82eabb"></div><div class="c" style="left:109.00px;top:228.60px;width:13.70px;height:9.55px;background:#82ebd5"></div><div class="c" style="left:122.00px;top:228.60px;width:1.82px;height:9.55px;background:#5cd7b6"></div><div class="c" style="left:123.12px;top:228.60px;width:2.97px;height:9.55px;background:#82eb8d"></div><div class="c" style="left:125.57px;top:228.60px;width:1.76px;height:9.55px;background:#5cf3ae"></div><div class="c" style="left:128.90px;top:228.60px;width:2.19px;height:9.55px;background:#5cdcb1"></div><div class="c" style="left:130.39px;top:228.60px;width:1.71px;height:9.55px;background:#82ebbf"></div><div class="c" style="left:131.41px;top:228.60px;width:2.95px;height:9.55px;background:#5cdd8d"></div><div class="c" style="left:133.65px;top:228.60px;width:3.20px;height:9.55px;background:#5ce98f"></div><div class="c" style="left:136.16px;top:228.60px;width:3.17px;height:9.55px;background:#82eb8d"></div><div class="c" style="left:138.63px;top:228.60px;width:2.65px;height:9.55px;background:#82e4d2"></div><div class="c" style="left:140.58px;top:228.60px;width:2.32px;height:9.55px;background:#82ebcf"></div><div class="c" style="left:142.20px;top:228.60px;width:35.40px;height:9.55px;background:#82e9cc"><span style="width:41.51px;top:1px">buildT…</span></div><div class="c" style="left:176.90px;top:228.60px;width:2.38px;height:9.55px;background:#5cd988"></div><div class="c" style="left:178.75px;top:228.60px;width:1.57px;height:9.55px;background:#82e1de"></div><div class="c" style="left:626.17px;top:228.60px;width:0.85px;height:9.55px;background:#5cec75"></div><div class="c" style="left:631.40px;top:228.60px;width:3.00px;height:9.55px;background:#82e58e"></div><div class="c" style="left:633.70px;top:228.60px;width:4.40px;height:9.55px;background:#82e0b6"></div><div class="c" style="left:637.57px;top:228.60px;width:3.15px;height:9.55px;background:#82f383"></div><div class="c" style="left:88.38px;top:239.25px;width:0.50px;height:9.55px;background:#5ce979"></div><div class="c" style="left:91.97px;top:239.25px;width:2.95px;height:9.55px;background:#82e0b4"></div><div class="c" style="left:109.17px;top:239.25px;width:12.65px;height:9.55px;background:#5cdf82"></div><div class="c" style="left:122.50px;top:239.25px;width:1.87px;height:9.55px;background:#5ce370"></div><div class="c" style="left:123.67px;top:239.25px;width:3.25px;height:9.55px;background:#82e587"></div><div class="c" style="left:126.22px;top:239.25px;width:3.03px;height:9.55px;background:#82f486"></div><div class="c" style="left:128.55px;top:239.25px;width:2.15px;height:9.55px;background:#82ebcd"></div><div class="c" style="left:130.00px;top:239.25px;width:3.04px;height:9.55px;background:#82f7a8"></div><div class="c" style="left:132.34px;top:239.25px;width:2.12px;height:9.55px;background:#5cdfa1"></div><div class="c" style="left:133.77px;top:239.25px;width:2.22px;height:9.55px;background:#5ceaa3"></div><div class="c" style="left:135.29px;top:239.25px;width:1.61px;height:9.55px;background:#5ce9a8"></div><div class="c" style="left:136.20px;top:239.25px;width:2.90px;height:9.55px;background:#82f7e8"></div><div class="c" style="left:138.40px;top:239.25px;width:1.91px;height:9.55px;background:#5ce99d"></div><div class="c" style="left:139.60px;top:239.25px;width:1.82px;height:9.55px;background:#5ce797"></div><div class="c" style="left:140.72px;top:239.25px;width:2.18px;height:9.55px;background:#5ceac7"></div><div class="c" style="left:142.20px;top:239.25px;width:35.50px;height:9.55px;background:#82ebbd"><span style="width:41.64px;top:1px">buildT…</span></div><div class="c" style="left:177.00px;top:239.25px;width:2.70px;height:9.55px;background:#5cf1e2"></div><div class="c" style="left:179.18px;top:239.25px;width:1.15px;height:9.55px;background:#5cf094"></div><div class="c" style="left:626.17px;top:239.25px;width:0.85px;height:9.55px;background:#5cec75"></div><div class="c" style="left:631.40px;top:239.25px;width:3.00px;height:9.55px;background:#5cdbdc"></div><div class="c" style="left:633.70px;top:239.25px;width:4.40px;height:9.55px;background:#82f5a2"></div><div class="c" style="left:637.57px;top:239.25px;width:3.15px;height:9.55px;background:#5cdca0"></div><div class="c" style="left:88.38px;top:249.90px;width:0.95px;height:9.55px;background:#5cef71"></div><div class="c" style="left:91.97px;top:249.90px;width:2.95px;height:9.55px;background:#82f6a9"></div><div class="c" style="left:108.00px;top:249.90px;width:14.70px;height:9.55px;background:#82f0ae"></div><div class="c" style="left:122.00px;top:249.90px;width:2.47px;height:9.55px;background:#82e1e0"></div><div class="c" style="left:123.77px;top:249.90px;width:2.24px;height:9.55px;background:#5cf572"></div><div class="c" style="left:125.31px;top:249.90px;width:1.71px;height:9.55px;background:#82f2de"></div><div class="c" style="left:126.32px;top:249.90px;width:1.79px;height:9.55px;background:#5cdbac"></div><div class="c" style="left:127.41px;top:249.90px;width:2.98px;height:9.55px;background:#82f897"></div><div class="c" style="left:129.69px;top:249.90px;width:2.83px;height:9.55px;background:#82e68a"></div><div class="c" style="left:131.82px;top:249.90px;width:2.64px;height:9.55px;background:#5ce075"></div><div class="c" style="left:133.75px;top:249.90px;width:2.64px;height:9.55px;background:#5ce873"></div><div class="c" style="left:135.70px;top:249.90px;width:3.24px;height:9.55px;background:#82ee9c"></div><div class="c" style="left:138.24px;top:249.90px;width:2.65px;height:9.55px;background:#5cdf90"></div><div class="c" style="left:140.18px;top:249.90px;width:1.94px;height:9.55px;background:#82eb96"></div><div class="c" style="left:141.42px;top:249.90px;width:1.88px;height:9.55px;background:#5ce299"></div><div class="c" style="left:142.60px;top:249.90px;width:35.70px;height:9.55px;background:#82ebb8"><span style="width:41.91px;top:1px">run</span></div><div class="c" style="left:177.60px;top:249.90px;width:2.15px;height:9.55px;background:#82e4b4"></div><div class="c" style="left:179.05px;top:249.90px;width:1.72px;height:9.55px;background:#5ceb6b"></div><div class="c" style="left:180.07px;top:249.90px;width:1.70px;height:9.55px;background:#5cea7e"></div><div class="c" style="left:181.25px;top:249.90px;width:1.08px;height:9.55px;background:#5cd883"></div><div class="c" style="left:183.48px;top:249.90px;width:440.55px;height:9.55px;background:#80dce6"><span style="width:570.43px;top:1px">QArrayData::allocate(unsigned long, unsigned long, unsigned long, QFlags&lt;QArrayData::AllocationOption&gt;)</span></div><div class="c" style="left:626.17px;top:249.90px;width:0.85px;height:9.55px;background:#5cec75"></div><div class="c" style="left:631.40px;top:249.90px;width:3.00px;height:9.55px;background:#82e0b8"></div><div class="c" style="left:633.70px;top:249.90px;width:4.40px;height:9.55px;background:#82f188"></div><div class="c" style="left:637.57px;top:249.90px;width:3.15px;height:9.55px;background:#82ef87"></div><div class="c" style="left:88.38px;top:260.55px;width:1.45px;height:9.55px;background:#5cf587"></div><div class="c" style="left:91.97px;top:260.55px;width:2.95px;height:9.55px;background:#82ef88"></div><div class="c" style="left:108.00px;top:260.55px;width:14.70px;height:9.55px;background:#82f0b3"></div><div class="c" style="left:122.00px;top:260.55px;width:2.21px;height:9.55px;background:#82edc8"></div><div class="c" style="left:123.51px;top:260.55px;width:2.77px;height:9.55px;background:#82e2a1"></div><div class="c" style="left:125.58px;top:260.55px;width:2.67px;height:9.55px;background:#82ebde"></div><div class="c" style="left:127.55px;top:260.55px;width:2.05px;height:9.55px;background:#5ce4ba"></div><div class="c" style="left:128.90px;top:260.55px;width:2.16px;height:9.55px;background:#5cd9a4"></div><div class="c" style="left:130.37px;top:260.55px;width:2.65px;height:9.55px;background:#82e1a7"></div><div class="c" style="left:132.31px;top:260.55px;width:2.03px;height:9.55px;background:#82f3cb"></div><div class="c" style="left:133.64px;top:260.55px;width:3.12px;height:9.55px;background:#82f682"></div><div class="c" style="left:136.07px;top:260.55px;width:1.98px;height:9.55px;background:#82e8cf"></div><div class="c" style="left:137.34px;top:260.55px;width:2.31px;height:9.55px;background:#5ce463"></div><div class="c" style="left:138.95px;top:260.55px;width:1.99px;height:9.55px;background:#5cf063"></div><div class="c" style="left:140.24px;top:260.55px;width:1.60px;height:9.55px;background:#5ce38d"></div><div class="c" style="left:141.14px;top:260.55px;width:2.16px;height:9.55px;background:#82e6b5"></div><div class="c" style="left:142.60px;top:260.55px;width:35.70px;height:9.55px;background:#82e49f"><span style="width:41.91px;top:1px">Thread…</span></div><div class="c" style="left:177.60px;top:260.55px;width:2.32px;height:9.55px;background:#82f191"></div><div class="c" style="left:179.22px;top:260.55px;width:2.67px;height:9.55px;background:#82f189"></div><div class="c" style="left:181.19px;top:260.55px;width:2.01px;height:9.55px;background:#82e687"></div><div class="c" style="left:182.50px;top:260.55px;width:442.40px;height:9.55px;background:#00c400"><span style="width:572.85px;top:1px">QVector&lt;RowData&gt;::reallocData(int, int, QFlags&lt;QArrayData::AllocationOption&gt;)</span></div><div class="c" style="left:624.38px;top:260.55px;width:2.05px;height:9.55px;background:#82e491"></div><div class="c" style="left:626.17px;top:260.55px;width:0.85px;height:9.55px;background:#5cec75"></div><div class="c" style="left:631.40px;top:260.55px;width:3.00px;height:9.55px;background:#5cf5e0"></div><div class="c" style="left:633.70px;top:260.55px;width:4.40px;height:9.55px;background:#82f5b4"></div><div class="c" style="left:637.57px;top:260.55px;width:3.15px;height:9.55px;background:#82dfd7"></div><div class="c" style="left:88.27px;top:271.20px;width:1.35px;height:9.55px;background:#5ced72"></div><div class="c" style="left:91.97px;top:271.20px;width:2.95px;height:9.55px;background:#5ceea9"></div><div class="c" style="left:107.80px;top:271.20px;width:15.30px;height:9.55px;background:#82e6cc"></div><div class="c" style="left:122.40px;top:271.20px;width:1.62px;height:9.55px;background:#5cdfd0"></div><div class="c" style="left:123.32px;top:271.20px;width:1.76px;height:9.55px;background:#82f394"></div><div class="c" style="left:124.39px;top:271.20px;width:2.93px;height:9.55px;background:#5ce5e0"></div><div class="c" style="left:126.62px;top:271.20px;width:1.62px;height:9.55px;background:#82f3e9"></div><div class="c" style="left:127.54px;top:271.20px;width:2.20px;height:9.55px;background:#82f3cb"></div><div class="c" style="left:129.03px;top:271.20px;width:3.19px;height:9.55px;background:#5cf3ac"></div><div class="c" style="left:131.52px;top:271.20px;width:3.14px;height:9.55px;background:#82e089"></div><div class="c" style="left:133.96px;top:271.20px;width:2.29px;height:9.55px;background:#5cdf75"></div><div class="c" style="left:135.55px;top:271.20px;width:2.92px;height:9.55px;background:#82dfce"></div><div class="c" style="left:137.78px;top:271.20px;width:3.20px;height:9.55px;background:#5cdb9f"></div><div class="c" style="left:140.27px;top:271.20px;width:3.03px;height:9.55px;background:#82efd3"></div><div class="c" style="left:142.78px;top:271.20px;width:34.65px;height:9.55px;background:#82f0e9"><span style="width:40.54px;top:1px">Thread…</span></div><div class="c" style="left:177.60px;top:271.20px;width:454.50px;height:9.55px;background:#00b890"><span style="width:588.64px;top:1px">operator()</span></div><div class="c" style="left:631.40px;top:271.20px;width:3.00px;height:9.55px;background:#82f1d4"></div><div class="c" style="left:633.70px;top:271.20px;width:4.40px;height:9.55px;background:#82eee3"></div><div class="c" style="left:637.57px;top:271.20px;width:3.15px;height:9.55px;background:#82e28c"></div><div class="c" style="left:88.27px;top:281.85px;width:1.35px;height:9.55px;background:#5cee78"></div><div class="c" style="left:91.97px;top:281.85px;width:2.95px;height:9.55px;background:#82e1a7"></div><div class="c" style="left:108.00px;top:281.85px;width:15.10px;height:9.55px;background:#82e99f"></div><div class="c" style="left:122.40px;top:281.85px;width:3.29px;height:9.55px;background:#82f6e4"></div><div class="c" style="left:124.99px;top:281.85px;width:2.52px;height:9.55px;background:#82ebb8"></div><div class="c" style="left:126.81px;top:281.85px;width:2.39px;height:9.55px;background:#82f6d4"></div><div class="c" style="left:128.50px;top:281.85px;width:1.98px;height:9.55px;background:#5cd986"></div><div class="c" style="left:129.78px;top:281.85px;width:1.67px;height:9.55px;background:#82e9e0"></div><div class="c" style="left:130.75px;top:281.85px;width:3.20px;height:9.55px;background:#5ce0d0"></div><div class="c" style="left:133.25px;top:281.85px;width:2.68px;height:9.55px;background:#82f4b8"></div><div class="c" style="left:135.23px;top:281.85px;width:3.16px;height:9.55px;background:#82e7a7"></div><div class="c" style="left:137.69px;top:281.85px;width:3.24px;height:9.55px;background:#82e68c"></div><div class="c" style="left:140.23px;top:281.85px;width:1.63px;height:9.55px;background:#82e79f"></div><div class="c" style="left:141.16px;top:281.85px;width:2.14px;height:9.55px;background:#82e4e0"></div><div class="c" style="left:142.78px;top:281.85px;width:34.65px;height:9.55px;background:#82e491"><span style="width:40.54px;top:1px">Thread…</span></div><div class="c" style="left:177.60px;top:281.85px;width:454.50px;height:9.55px;background:#00c400"><span style="width:588.64px;top:1px">ThreadWeaver::Executor::run(QSharedPointer&lt;ThreadWeaver::JobInterface&gt; const&amp;, ThreadWeaver::Thread*)</span></div><div class="c" style="left:631.40px;top:281.85px;width:3.00px;height:9.55px;background:#82e695"></div><div class="c" style="left:633.70px;top:281.85px;width:4.40px;height:9.55px;background:#5ce75c"></div><div class="c" style="left:637.57px;top:281.85px;width:3.15px;height:9.55px;background:#82f491"></div><div class="c" style="left:88.27px;top:292.50px;width:1.35px;height:9.55px;background:#5cdd9b"></div><div class="c" style="left:91.97px;top:292.50px;width:2.95px;height:9.55px;background:#82e6b2"></div><div class="c" style="left:107.20px;top:292.50px;width:15.90px;height:9.55px;background:#82eba4"></div><div class="c" style="left:122.40px;top:292.50px;width:2.67px;height:9.55px;background:#82f5d5"></div><div class="c" style="left:124.37px;top:292.50px;width:2.51px;height:9.55px;background:#82eec4"></div><div class="c" style="left:126.18px;top:292.50px;width:3.06px;height:9.55px;background:#5ce7d2"></div><div class="c" style="left:128.54px;top:292.50px;width:3.10px;height:9.55px;background:#5cf57e"></div><div class="c" style="left:130.95px;top:292.50px;width:2.60px;height:9.55px;background:#5cec77"></div><div class="c" style="left:132.84px;top:292.50px;width:1.65px;height:9.55px;background:#82e2d0"></div><div class="c" style="left:133.79px;top:292.50px;width:2.19px;height:9.55px;background:#5cdbce"></div><div class="c" style="left:135.27px;top:292.50px;width:1.67px;height:9.55px;background:#82f5d2"></div><div class="c" style="left:136.24px;top:292.50px;width:2.78px;height:9.55px;background:#5cf363"></div><div class="c" style="left:138.33px;top:292.50px;width:2.60px;height:9.55px;background:#82ea9b"></div><div class="c" style="left:140.23px;top:292.50px;width:3.07px;height:9.55px;background:#82f48a"></div><div class="c" style="left:142.78px;top:292.50px;width:34.65px;height:9.55px;background:#82eb9f"><span style="width:40.54px;top:1px">Thread…</span></div><div class="c" style="left:177.60px;top:292.50px;width:454.50px;height:9.55px;background:#08c828"><span style="width:588.64px;top:1px">ThreadWeaver::Private::DefaultExecutor::execute(QSharedPointer&lt;ThreadWeaver::JobInterface&gt; const&amp;, ThreadWeaver::Thread*)</span></div><div class="c" style="left:631.40px;top:292.50px;width:3.00px;height:9.55px;background:#82e29d"></div><div class="c" style="left:633.70px;top:292.50px;width:4.40px;height:9.55px;background:#5cdba9"></div><div class="c" style="left:637.57px;top:292.50px;width:3.15px;height:9.55px;background:#5cf3b9"></div><div class="c" style="left:88.27px;top:303.15px;width:1.35px;height:9.55px;background:#82f7db"></div><div class="c" style="left:91.97px;top:303.15px;width:2.95px;height:9.55px;background:#5cd984"></div><div class="c" style="left:107.20px;top:303.15px;width:15.90px;height:9.55px;background:#82eebd"></div><div class="c" style="left:122.40px;top:303.15px;width:1.79px;height:9.55px;background:#82e0e7"></div><div class="c" style="left:123.49px;top:303.15px;width:1.75px;height:9.55px;background:#82f7d1"></div><div class="c" style="left:124.54px;top:303.15px;width:2.41px;height:9.55px;background:#82e38e"></div><div class="c" style="left:126.25px;top:303.15px;width:2.70px;height:9.55px;background:#5ce190"></div><div class="c" style="left:128.25px;top:303.15px;width:2.04px;height:9.55px;background:#82eaa2"></div><div class="c" style="left:129.59px;top:303.15px;width:1.68px;height:9.55px;background:#82f7b0"></div><div class="c" style="left:130.58px;top:303.15px;width:2.91px;height:9.55px;background:#82f2c1"></div><div class="c" style="left:132.78px;top:303.15px;width:2.09px;height:9.55px;background:#82f685"></div><div class="c" style="left:134.17px;top:303.15px;width:1.65px;height:9.55px;background:#5cebda"></div><div class="c" style="left:135.12px;top:303.15px;width:2.40px;height:9.55px;background:#82e1c5"></div><div class="c" style="left:136.82px;top:303.15px;width:2.81px;height:9.55px;background:#82e2ca"></div><div class="c" style="left:138.94px;top:303.15px;width:1.89px;height:9.55px;background:#5cd5b2"></div><div class="c" style="left:140.13px;top:303.15px;width:3.17px;height:9.55px;background:#5cd75c"></div><div class="c" style="left:142.78px;top:303.15px;width:34.65px;height:9.55px;background:#82ebae"><span style="width:40.54px;top:1px">Thread…</span></div><div class="c" style="left:177.60px;top:303.15px;width:454.50px;height:9.55px;background:#00cc5a"><span style="width:588.64px;top:1px">ThreadWeaver::ExecuteWrapper::executeWrapped(QSharedPointer&lt;ThreadWeaver::JobInterface&gt; const&amp;, ThreadWeaver::Thread*)</span></div><div class="c" style="left:631.40px;top:303.15px;width:3.00px;height:9.55px;background:#5cf3d5"></div><div class="c" style="left:633.70px;top:303.15px;width:4.40px;height:9.55px;background:#82e1b0"></div><div class="c" style="left:637.57px;top:303.15px;width:3.15px;height:9.55px;background:#82f5d9"></div><div class="c" style="left:88.27px;top:313.80px;width:1.35px;height:9.55px;background:#82e2bf"></div><div class="c" style="left:91.97px;top:313.80px;width:2.95px;height:9.55px;background:#5cdcac"></div><div class="c" style="left:106.00px;top:313.80px;width:17.10px;height:9.55px;background:#82f5df"></div><div class="c" style="left:122.40px;top:313.80px;width:3.23px;height:9.55px;background:#82efa2"></div><div class="c" style="left:124.93px;top:313.80px;width:1.87px;height:9.55px;background:#5cdece"></div><div class="c" style="left:126.10px;top:313.80px;width:1.88px;height:9.55px;background:#5cefd9"></div><div class="c" style="left:127.28px;top:313.80px;width:2.94px;height:9.55px;background:#82f5c8"></div><div class="c" style="left:129.52px;top:313.80px;width:2.67px;height:9.55px;background:#82ea8e"></div><div class="c" style="left:131.49px;top:313.80px;width:2.27px;height:9.55px;background:#82f68d"></div><div class="c" style="left:133.06px;top:313.80px;width:2.70px;height:9.55px;background:#5ce47d"></div><div class="c" style="left:135.05px;top:313.80px;width:2.33px;height:9.55px;background:#5cebae"></div><div class="c" style="left:136.68px;top:313.80px;width:3.27px;height:9.55px;background:#82f39f"></div><div class="c" style="left:139.25px;top:313.80px;width:1.82px;height:9.55px;background:#82f2e1"></div><div class="c" style="left:140.37px;top:313.80px;width:2.93px;height:9.55px;background:#82e0ae"></div><div class="c" style="left:142.78px;top:313.80px;width:34.65px;height:9.55px;background:#82e6b3"><span style="width:40.54px;top:1px">Thread…</span></div><div class="c" style="left:177.60px;top:313.80px;width:454.50px;height:9.55px;background:#00c186"><span style="width:588.64px;top:1px">ThreadWeaver::Private::DebugExecuteWrapper::execute(QSharedPointer&lt;ThreadWeaver::JobInterface&gt; const&amp;, ThreadWeaver::Thread*)</span></div><div class="c" style="left:631.40px;top:313.80px;width:3.00px;height:9.55px;background:#5cf3d8"></div><div class="c" style="left:633.70px;top:313.80px;width:4.40px;height:9.55px;background:#82f3c8"></div><div class="c" style="left:637.57px;top:313.80px;width:3.15px;height:9.55px;background:#82edd6"></div><div class="c" style="left:88.40px;top:324.45px;width:2.40px;height:9.55px;background:#5ce975"></div><div class="c" style="left:90.10px;top:324.45px;width:2.50px;height:9.55px;background:#82f5e4"></div><div class="c" style="left:91.90px;top:324.45px;width:2.49px;height:9.55px;background:#82edd5"></div><div class="c" style="left:93.69px;top:324.45px;width:2.15px;height:9.55px;background:#82edb9"></div><div class="c" style="left:95.31px;top:324.45px;width:0.51px;height:9.55px;background:#5cde70"></div><div class="c" style="left:97.97px;top:324.45px;width:1.45px;height:9.55px;background:#5cec6f"></div><div class="c" style="left:106.10px;top:324.45px;width:3.70px;height:9.55px;background:#5cf0ce"></div><div class="c" style="left:109.10px;top:324.45px;width:15.50px;height:9.55px;background:#82f8e4"></div><div class="c" style="left:123.90px;top:324.45px;width:1.93px;height:9.55px;background:#82e8e1"></div><div class="c" style="left:125.13px;top:324.45px;width:3.03px;height:9.55px;background:#5cdbd2"></div><div class="c" style="left:127.46px;top:324.45px;width:2.02px;height:9.55px;background:#82e9cd"></div><div class="c" style="left:128.78px;top:324.45px;width:1.87px;height:9.55px;background:#5ce27b"></div><div class="c" style="left:129.95px;top:324.45px;width:3.22px;height:9.55px;background:#82e297"></div><div class="c" style="left:132.48px;top:324.45px;width:1.77px;height:9.55px;background:#82eb95"></div><div class="c" style="left:133.55px;top:324.45px;width:2.95px;height:9.55px;background:#82f6a7"></div><div class="c" style="left:135.80px;top:324.45px;width:1.93px;height:9.55px;background:#5cef6d"></div><div class="c" style="left:137.04px;top:324.45px;width:3.10px;height:9.55px;background:#5ce861"></div><div class="c" style="left:139.44px;top:324.45px;width:3.05px;height:9.55px;background:#5ce7cd"></div><div class="c" style="left:141.79px;top:324.45px;width:1.51px;height:9.55px;background:#5ce1a7"></div><div class="c" style="left:142.60px;top:324.45px;width:489.50px;height:9.55px;background:#00bcd4"><span style="width:634.33px;top:1px">ThreadWeaver::Job::execute(QSharedPointer&lt;ThreadWeaver::JobInterface&gt; const&amp;, ThreadWeaver::Thread*)</span></div><div class="c" style="left:631.40px;top:324.45px;width:3.00px;height:9.55px;background:#82e788"></div><div class="c" style="left:633.70px;top:324.45px;width:4.40px;height:9.55px;background:#5cd565"></div><div class="c" style="left:637.57px;top:324.45px;width:3.15px;height:9.55px;background:#82f3d8"></div><div class="c" style="left:88.10px;top:335.10px;width:4.50px;height:9.55px;background:#5ce582"></div><div class="c" style="left:91.90px;top:335.10px;width:2.04px;height:9.55px;background:#5cf39e"></div><div class="c" style="left:93.24px;top:335.10px;width:2.01px;height:9.55px;background:#82ecda"></div><div class="c" style="left:94.72px;top:335.10px;width:1.10px;height:9.55px;background:#82ec9e"></div><div class="c" style="left:97.80px;top:335.10px;width:2.71px;height:9.55px;background:#82f7d2"></div><div class="c" style="left:99.98px;top:335.10px;width:2.44px;height:9.55px;background:#82f499"></div><div class="c" style="left:106.10px;top:335.10px;width:3.70px;height:9.55px;background:#5ce8a2"></div><div class="c" style="left:109.10px;top:335.10px;width:15.50px;height:9.55px;background:#82e6e6"></div><div class="c" style="left:123.90px;top:335.10px;width:2.67px;height:9.55px;background:#5cd9a0"></div><div class="c" style="left:125.87px;top:335.10px;width:2.28px;height:9.55px;background:#5cf2c3"></div><div class="c" style="left:127.45px;top:335.10px;width:3.04px;height:9.55px;background:#5ce9a6"></div><div class="c" style="left:129.79px;top:335.10px;width:3.06px;height:9.55px;background:#82efd6"></div><div class="c" style="left:132.15px;top:335.10px;width:3.08px;height:9.55px;background:#82f3ab"></div><div class="c" style="left:134.54px;top:335.10px;width:2.26px;height:9.55px;background:#5ce96d"></div><div class="c" style="left:136.10px;top:335.10px;width:2.52px;height:9.55px;background:#82e4dc"></div><div class="c" style="left:137.92px;top:335.10px;width:3.20px;height:9.55px;background:#5ceb95"></div><div class="c" style="left:140.42px;top:335.10px;width:2.88px;height:9.55px;background:#82f09b"></div><div class="c" style="left:142.60px;top:335.10px;width:489.50px;height:9.55px;background:#00c8a8"><span style="width:634.33px;top:1px">ThreadWeaver::Thread::run()</span></div><div class="c" style="left:631.40px;top:335.10px;width:3.00px;height:9.55px;background:#5cd99b"></div><div class="c" style="left:633.70px;top:335.10px;width:4.40px;height:9.55px;background:#5cf3be"></div><div class="c" style="left:637.57px;top:335.10px;width:3.15px;height:9.55px;background:#5ce9bf"></div><div class="c" style="left:88.10px;top:345.75px;width:3.30px;height:9.55px;background:#82f3e4"></div><div class="c" style="left:90.88px;top:345.75px;width:6.75px;height:9.55px;background:#82f0d5"></div><div class="c" style="left:97.80px;top:345.75px;width:5.50px;height:9.55px;background:#82f5e4"></div><div class="c" style="left:102.77px;top:345.75px;width:1.35px;height:9.55px;background:#5ce975"></div><div class="c" style="left:106.10px;top:345.75px;width:3.70px;height:9.55px;background:#82ef84"></div><div class="c" style="left:109.10px;top:345.75px;width:15.50px;height:9.55px;background:#82ebb8"></div><div class="c" style="left:123.90px;top:345.75px;width:3.01px;height:9.55px;background:#82efad"></div><div class="c" style="left:126.21px;top:345.75px;width:3.21px;height:9.55px;background:#5cdecc"></div><div class="c" style="left:128.72px;top:345.75px;width:2.47px;height:9.55px;background:#82e3dd"></div><div class="c" style="left:130.49px;top:345.75px;width:2.20px;height:9.55px;background:#5cd785"></div><div class="c" style="left:132.00px;top:345.75px;width:2.28px;height:9.55px;background:#82df8b"></div><div class="c" style="left:133.58px;top:345.75px;width:2.31px;height:9.55px;background:#5cf2ca"></div><div class="c" style="left:135.19px;top:345.75px;width:2.05px;height:9.55px;background:#82e6a8"></div><div class="c" style="left:136.54px;top:345.75px;width:3.20px;height:9.55px;background:#82ef9d"></div><div class="c" style="left:139.04px;top:345.75px;width:3.23px;height:9.55px;background:#5ce87e"></div><div class="c" style="left:141.58px;top:345.75px;width:1.72px;height:9.55px;background:#82e1e7"></div><div class="c" style="left:142.60px;top:345.75px;width:489.50px;height:9.55px;background:#00d283"><span style="width:634.33px;top:1px">0x7f819a747de7</span></div><div class="c" style="left:631.40px;top:345.75px;width:3.00px;height:9.55px;background:#82eaca"></div><div class="c" style="left:633.70px;top:345.75px;width:4.40px;height:9.55px;background:#5ce9cb"></div><div class="c" style="left:637.57px;top:345.75px;width:3.15px;height:9.55px;background:#82e3af"></div><div class="c" style="left:88.10px;top:356.40px;width:3.30px;height:9.55px;background:#5ce975"></div><div class="c" style="left:90.70px;top:356.40px;width:16.70px;height:9.55px;background:#82e6eb"></div><div class="c" style="left:106.70px;top:356.40px;width:3.70px;height:9.55px;background:#82e5bd"></div><div class="c" style="left:109.88px;top:356.40px;width:13.85px;height:9.55px;background:#82eea4"></div><div class="c" style="left:123.90px;top:356.40px;width:6.20px;height:9.55px;background:#82f5e4"></div><div class="c" style="left:129.40px;top:356.40px;width:2.83px;height:9.55px;background:#82e4ae"></div><div class="c" style="left:131.53px;top:356.40px;width:3.01px;height:9.55px;background:#82f8e8"></div><div class="c" style="left:133.84px;top:356.40px;width:3.29px;height:9.55px;background:#82f7c7"></div><div class="c" style="left:136.43px;top:356.40px;width:2.93px;height:9.55px;background:#82eeae"></div><div class="c" style="left:138.66px;top:356.40px;width:1.99px;height:9.55px;background:#82f5b1"></div><div class="c" style="left:139.95px;top:356.40px;width:3.35px;height:9.55px;background:#82f499"></div><div class="c" style="left:142.60px;top:356.40px;width:489.50px;height:9.55px;background:#00e200"><span style="width:634.33px;top:1px">start_thread</span></div><div class="c" style="left:631.40px;top:356.40px;width:3.00px;height:9.55px;background:#82e4d1"></div><div class="c" style="left:633.70px;top:356.40px;width:4.40px;height:9.55px;background:#82eeb2"></div><div class="c" style="left:637.57px;top:356.40px;width:3.15px;height:9.55px;background:#82eda4"></div><div class="c" style="left:88.20px;top:367.05px;width:41.10px;height:9.55px;background:#82df8c"><span style="width:48.96px;top:1px">main</span></div><div class="c" style="left:128.60px;top:367.05px;width:2.97px;height:9.55px;background:#5ce096"></div><div class="c" style="left:130.87px;top:367.05px;width:2.11px;height:9.55px;background:#82eebf"></div><div class="c" style="left:132.28px;top:367.05px;width:2.68px;height:9.55px;background:#5cf097"></div><div class="c" style="left:134.27px;top:367.05px;width:2.12px;height:9.55px;background:#5ce565"></div><div class="c" style="left:135.68px;top:367.05px;width:2.56px;height:9.55px;background:#82e9e4"></div><div class="c" style="left:137.54px;top:367.05px;width:2.50px;height:9.55px;background:#82ead1"></div><div class="c" style="left:139.34px;top:367.05px;width:2.72px;height:9.55px;background:#82e68b"></div><div class="c" style="left:141.36px;top:367.05px;width:1.94px;height:9.55px;background:#5cd9bb"></div><div class="c" style="left:142.60px;top:367.05px;width:489.50px;height:9.55px;background:#00e224"><span style="width:634.33px;top:1px">clone</span></div><div class="c" style="left:631.40px;top:367.05px;width:3.00px;height:9.55px;background:#5cec92"></div><div class="c" style="left:633.70px;top:367.05px;width:4.40px;height:9.55px;background:#82e1d0"></div><div class="c" style="left:637.57px;top:367.05px;width:3.15px;height:9.55px;background:#82f5e6"></div>
<div class="abs" style="left:88px;top:378px;font:8px 'Liberation Mono',monospace;color:#232629;line-height:9.74px;white-space:nowrap;"><span style="display:inline-block;transform:scaleX(0.832);transform-origin:0 0;margin-left:2px;-webkit-text-stroke:0.05px #232629">3.2105e+6 allocations in total</span></div>
<div class="abs" style="left:83px;top:391px;font:7.58px 'Liberation Sans',sans-serif;color:#232629;line-height:11px;white-space:nowrap">2552553 (79.5%) allocations in <span style="font:6.67px 'Liberation Mono',monospace">QVector&lt;RowData&gt;::reallocData(int, int, QFlags&lt;QArrayData::AllocationOption&gt;)</span> and below.</div>

</div></body></html>
